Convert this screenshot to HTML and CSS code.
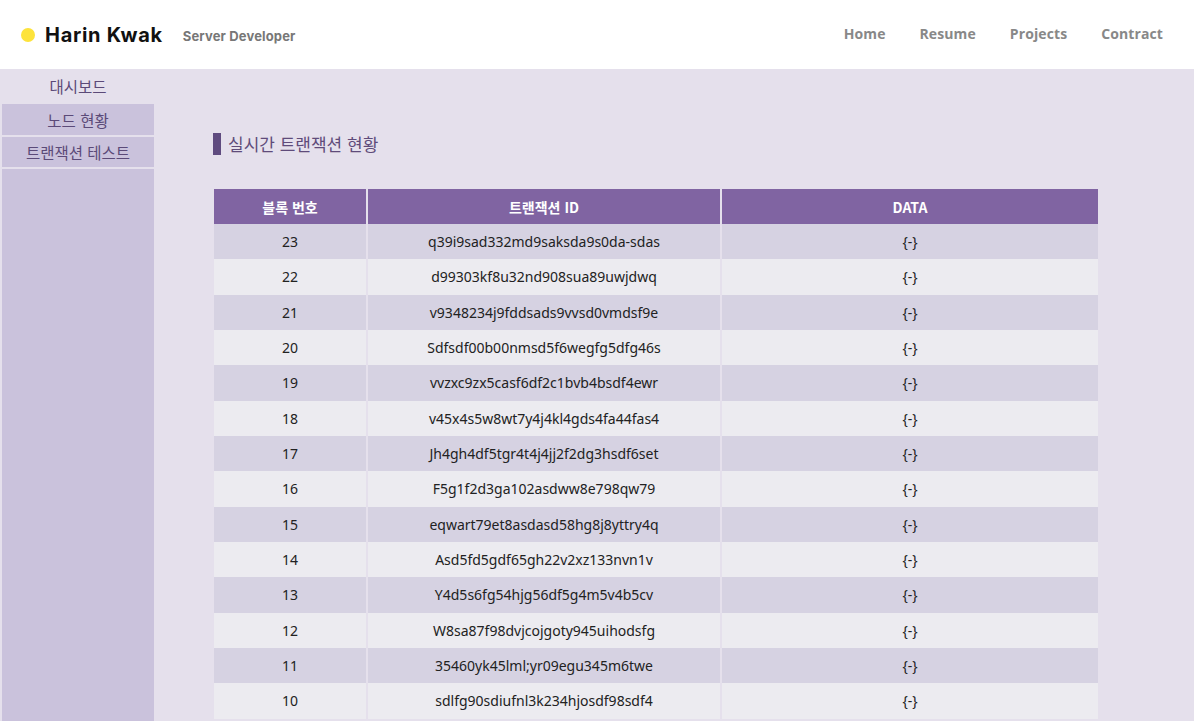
FILE: index.html
```html
<!DOCTYPE html>
<html lang="ko">
<head>
<meta charset="utf-8">
<title>Harin Kwak</title>
<link rel="stylesheet" href="styles.css">
</head>
<body>
<header class="topbar">
  <div class="brand">
    <span class="dot"></span>
    <span class="name">Harin Kwak</span>
    <span class="role">Server Developer</span>
  </div>
  <nav class="menu">
    <a href="#">Home</a>
    <a href="#">Resume</a>
    <a href="#">Projects</a>
    <a href="#">Contract</a>
  </nav>
</header>
<div class="layout">
  <aside class="sidebar">
    <a class="side-item active" href="#">대시보드</a>
    <a class="side-item" href="#">노드 현황</a>
    <a class="side-item" href="#">트랜잭션 테스트</a>
    <div class="side-fill"></div>
  </aside>
  <main class="content">
    <h2 class="section-title">실시간 트랜잭션 현황</h2>
    <table class="tx-table">
      <thead>
        <tr><th class="c1">블록 번호</th><th class="c2">트랜잭션 ID</th><th class="c3">DATA</th></tr>
      </thead>
      <tbody>
        <tr><td>23</td><td>q39i9sad332md9saksda9s0da-sdas</td><td>{-}</td></tr>
        <tr><td>22</td><td>d99303kf8u32nd908sua89uwjdwq</td><td>{-}</td></tr>
        <tr><td>21</td><td>v9348234j9fddsads9vvsd0vmdsf9e</td><td>{-}</td></tr>
        <tr><td>20</td><td>Sdfsdf00b00nmsd5f6wegfg5dfg46s</td><td>{-}</td></tr>
        <tr><td>19</td><td>vvzxc9zx5casf6df2c1bvb4bsdf4ewr</td><td>{-}</td></tr>
        <tr><td>18</td><td>v45x4s5w8wt7y4j4kl4gds4fa44fas4</td><td>{-}</td></tr>
        <tr><td>17</td><td>Jh4gh4df5tgr4t4j4jj2f2dg3hsdf6set</td><td>{-}</td></tr>
        <tr><td>16</td><td>F5g1f2d3ga102asdww8e798qw79</td><td>{-}</td></tr>
        <tr><td>15</td><td>eqwart79et8asdasd58hg8j8yttry4q</td><td>{-}</td></tr>
        <tr><td>14</td><td>Asd5fd5gdf65gh22v2xz133nvn1v</td><td>{-}</td></tr>
        <tr><td>13</td><td>Y4d5s6fg54hjg56df5g4m5v4b5cv</td><td>{-}</td></tr>
        <tr><td>12</td><td>W8sa87f98dvjcojgoty945uihodsfg</td><td>{-}</td></tr>
        <tr><td>11</td><td>35460yk45lml;yr09egu345m6twe</td><td>{-}</td></tr>
        <tr><td>10</td><td>sdlfg90sdiufnl3k234hjosdf98sdf4</td><td>{-}</td></tr>
      </tbody>
    </table>
  </main>
</div>
</body>
</html>
```
FILE: styles.css
```css
* { box-sizing: border-box; }
html, body {
  margin: 0;
  height: 100%;
}
body {
  background: #e5e0ec;
  font-family: "Noto Sans", "Noto Sans CJK KR", sans-serif;
  overflow: hidden;
}
.topbar {
  height: 69px;
  background: #ffffff;
  display: flex;
  align-items: center;
  justify-content: space-between;
  padding: 0 31px 0 21px;
}
.brand {
  display: flex;
  align-items: center;
}
.dot {
  width: 14px;
  height: 14px;
  border-radius: 50%;
  background: #fde33b;
  margin-right: 10px;
}
.name {
  font-family: "Inter", sans-serif;
  font-weight: 700;
  font-size: 20px;
  color: #111111;
  letter-spacing: 0.7px;
}
.role {
  font-family: "Inter", sans-serif;
  font-weight: 700;
  font-size: 13px;
  color: #777777;
  margin-left: 20px;
  margin-top: 2px;
  letter-spacing: 0.15px;
}
.menu {
  display: flex;
  gap: 34px;
  margin-bottom: 3px;
}
.menu a {
  font-family: "Open Sans", sans-serif;
  font-weight: 700;
  font-size: 14px;
  color: #888888;
  text-decoration: none;
  letter-spacing: 0.1px;
}
.layout {
  display: flex;
  height: calc(100% - 69px);
}
.sidebar {
  width: 154px;
  display: flex;
  flex-direction: column;
  padding-left: 2px;
}
.side-item {
  display: flex;
  align-items: center;
  justify-content: center;
  background: #cac2dc;
  color: #5b4a78;
  font-size: 15.5px;
  text-decoration: none;
  font-family: "Noto Sans CJK KR", sans-serif;
}
.side-item.active {
  background: #e5e0ec;
  height: 35px;
  padding-bottom: 2px;
}
.side-item:nth-child(2) { height: 31px; }
.side-item:nth-child(3) { height: 30px; margin-top: 2px; }
.side-fill {
  flex: 1;
  background: #cac2dc;
  margin-top: 2px;
}
.content {
  flex: 1;
  padding: 64px 0 0 59px;
}
.section-title {
  margin: 0 0 34px 0;
  height: 22px;
  border-left: 8px solid #5f4b7f;
  padding-left: 7px;
  font-family: "Noto Sans CJK KR", sans-serif;
  font-weight: 400;
  font-size: 17px;
  line-height: 22px;
  color: #5f4b7a;
}
.tx-table {
  width: 884px;
  margin-left: 1px;
  border-collapse: collapse;
  table-layout: fixed;
}
.tx-table th {
  background: #8064a2;
  color: #ffffff;
  font-family: "Noto Sans CJK KR", sans-serif;
  font-weight: 700;
  font-size: 14px;
  height: 35px;
  padding: 0;
}
.tx-table th.c1 { width: 153px; }
.tx-table th.c2 { width: 354px; }
.tx-table th + th,
.tx-table td + td {
  border-left: 2px solid #e5e0ec;
}
.tx-table td {
  height: 35.33px;
  padding: 0;
  text-align: center;
  font-size: 14px;
  color: #222222;
}
.tx-table tbody tr:nth-child(odd) td { background: #d6d2e2; }
.tx-table tbody tr:nth-child(even) td { background: #ecebf0; }
```
